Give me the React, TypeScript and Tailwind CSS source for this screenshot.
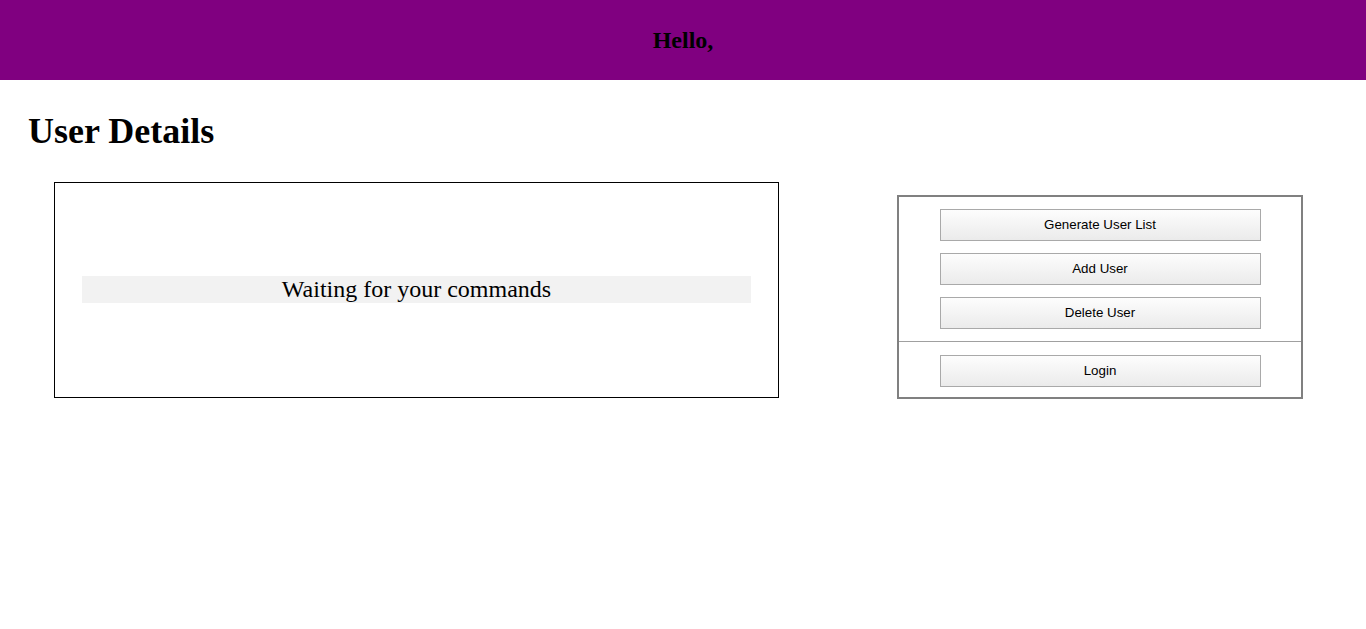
const serif = "font-['Liberation_Serif','Times_New_Roman',serif]";

const actions = ['Generate User List', 'Add User', 'Delete User'];

function ActionButton({ label }: { label: string }) {
  return (
    <button className="h-8 w-[321px] border border-[#a9a9a9] bg-gradient-to-b from-[#fdfdfd] to-[#ebebeb] font-['Liberation_Sans',Arial,sans-serif] text-[13.33px] text-black">
      {label}
    </button>
  );
}

export default function App() {
  return (
    <div className={`min-h-screen bg-white text-black ${serif}`}>
      {/* Header */}
      <div className="flex h-20 items-center justify-center bg-[#800080]">
        <h2 className="text-2xl font-bold">Hello,</h2>
      </div>

      <div className="px-7">
        <h1 className="mt-[30px] text-[36px] font-bold leading-[42px]">User Details</h1>

        <div className="mt-[30px] flex items-start">
          {/* Output panel */}
          <div className="ml-[26px] flex h-[216px] w-[725px] items-center border border-black px-[27px] pb-[2px]">
            <div className="w-full bg-[#f2f2f2] text-center text-2xl leading-[27px]">Waiting for your commands</div>
          </div>

          {/* Commands */}
          <div className="ml-[118px] mt-[13px] w-[406px] border-2 border-[#808080]">
            <div className="flex flex-col items-center gap-3 pb-3 pt-3">
              {actions.map(a => (
                <ActionButton key={a} label={a} />
              ))}
            </div>
            <div className="flex justify-center border-t border-[#a0a0a0] pb-[10px] pt-[13px]">
              <ActionButton label="Login" />
            </div>
          </div>
        </div>
      </div>
    </div>
  );
}
